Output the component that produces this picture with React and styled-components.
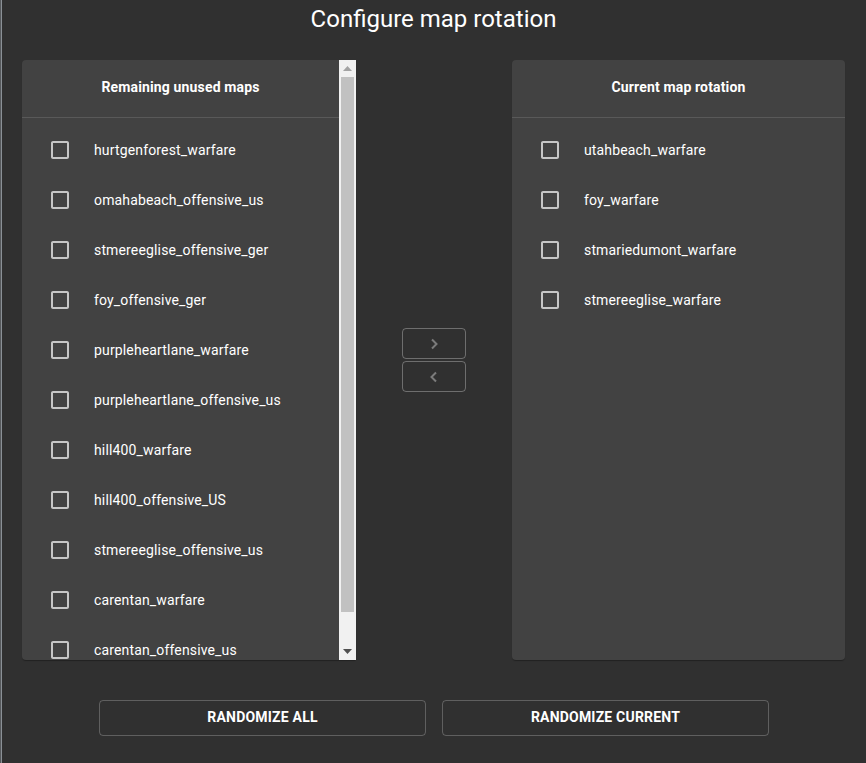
import styled, { createGlobalStyle } from 'styled-components';

const GlobalStyle = createGlobalStyle`
	html, body {
		margin: 0;
		padding: 0;
		background: #303030;
	}
	body {
		font-family: Roboto, 'Liberation Sans', Arial, sans-serif;
		color: #fff;
	}
`;

const Page = styled.div`
	box-sizing: border-box;
	min-height: 763px;
	width: 866px;
	border-left: 1px solid #55585b;
	box-shadow: inset 1px 0 0 #8a9096;
	padding-top: 3px;
`;
const Title = styled.h1`
	margin: 0;
	font-size: 24px;
	font-weight: 400;
	line-height: 32px;
	text-align: center;
	color: #fff;
`;
const Transfer = styled.div`
	display: grid;
	grid-template-columns: 334px 156px 333px;
	padding-left: 21px;
	margin-top: 25px;
`;
const Panel = styled.div`
	height: 600px;
	display: flex;
	background: #424242;
	border-radius: ${(props) => (props.scroll ? '4px 0 0 4px' : '4px')};
	overflow: hidden;
	box-shadow: 0 2px 1px -1px rgba(0, 0, 0, 0.2), 0 1px 1px 0 rgba(0, 0, 0, 0.14);
`;
const PanelBody = styled.div`
	flex: 1;
	min-width: 0;
	overflow: hidden;
`;
const ScrollBar = styled.div`
	width: 17px;
	flex: none;
	display: flex;
	flex-direction: column;
	background: #f1f1f1;
`;
const ScrollArrow = styled.div`
	height: 17px;
	display: flex;
	align-items: center;
	justify-content: center;
	svg {
		fill: ${(props) => (props.disabled ? '#a3a3a3' : '#505050')};
	}
`;
const ScrollTrack = styled.div`
	flex: 1;
	padding: 0 2px 31px;
	display: flex;
`;
const ScrollThumb = styled.div`
	flex: 1;
	background: #c1c1c1;
`;
const PanelHeader = styled.div`
	height: 58px;
	box-sizing: border-box;
	padding-bottom: 3px;
	display: flex;
	align-items: center;
	justify-content: center;
	font-size: 14px;
	font-weight: 700;
	letter-spacing: 0.15px;
	border-bottom: 1px solid rgba(255, 255, 255, 0.12);
`;
const List = styled.ul`
	list-style: none;
	margin: 0;
	padding: 7px 0 8px;
`;
const Item = styled.li`
	height: 50px;
	display: flex;
	align-items: center;
	padding-left: 26px;
	gap: 22px;
	font-size: 14px;
	letter-spacing: 0.15px;
	color: #fff;
`;
const Box = styled.svg`
	width: 24px;
	height: 24px;
	flex: none;
	fill: rgba(255, 255, 255, 0.7);
`;
const Middle = styled.div`
	display: flex;
	flex-direction: column;
	align-items: center;
	justify-content: center;
	gap: 2px;
`;
const MoveButton = styled.button`
	width: 64px;
	height: 31px;
	padding: 0;
	display: flex;
	align-items: center;
	justify-content: center;
	background: transparent;
	border: 1px solid rgba(255, 255, 255, 0.3);
	border-radius: 4px;
	svg {
		stroke: #7b7b7b;
	}
`;
const Actions = styled.div`
	display: flex;
	justify-content: center;
	gap: 16px;
	margin-top: 40px;
	padding-left: 1px;
`;
const ActionButton = styled.button`
	width: 327px;
	height: 36px;
	padding: 0 0 2px;
	background: transparent;
	border: 1px solid rgba(255, 255, 255, 0.23);
	border-radius: 4px;
	color: #fff;
	font-family: inherit;
	font-size: 14px;
	font-weight: 700;
	letter-spacing: 0.2px;
	text-transform: uppercase;
`;

const Checkbox = () => (
	<Box viewBox="0 0 24 24">
		<path d="M19 5v14H5V5h14m0-2H5c-1.1 0-2 .9-2 2v14c0 1.1.9 2 2 2h14c1.1 0 2-.9 2-2V5c0-1.1-.9-2-2-2z" />
	</Box>
);

const Chevron = ({ dir }) => (
	<svg width="12" height="12" viewBox="0 0 12 12" fill="none" strokeWidth="2">
		<polyline points={dir === 'right' ? '4,1.5 8.5,6 4,10.5' : '8,1.5 3.5,6 8,10.5'} />
	</svg>
);

const unused = [
	'hurtgenforest_warfare',
	'omahabeach_offensive_us',
	'stmereeglise_offensive_ger',
	'foy_offensive_ger',
	'purpleheartlane_warfare',
	'purpleheartlane_offensive_us',
	'hill400_warfare',
	'hill400_offensive_US',
	'stmereeglise_offensive_us',
	'carentan_warfare',
	'carentan_offensive_us',
];
const current = ['utahbeach_warfare', 'foy_warfare', 'stmariedumont_warfare', 'stmereeglise_warfare'];

const MapList = ({ title, maps, scroll }) => (
	<Panel scroll={scroll}>
		<PanelBody>
			<PanelHeader>{title}</PanelHeader>
			<List>
				{maps.map((m) => (
					<Item key={m}>
						<Checkbox />
						{m}
					</Item>
				))}
			</List>
		</PanelBody>
		{scroll && (
			<ScrollBar>
				<ScrollArrow disabled>
					<svg width="9" height="5" viewBox="0 0 9 5">
						<path d="M0 5h9L4.5 0z" />
					</svg>
				</ScrollArrow>
				<ScrollTrack>
					<ScrollThumb />
				</ScrollTrack>
				<ScrollArrow>
					<svg width="9" height="5" viewBox="0 0 9 5">
						<path d="M0 0h9L4.5 5z" />
					</svg>
				</ScrollArrow>
			</ScrollBar>
		)}
	</Panel>
);

const App = () => {
	return (
		<Page>
			<GlobalStyle />
			<Title>Configure map rotation</Title>
			<Transfer>
				<MapList title="Remaining unused maps" maps={unused} scroll />
				<Middle>
					<MoveButton>
						<Chevron dir="right" />
					</MoveButton>
					<MoveButton>
						<Chevron dir="left" />
					</MoveButton>
				</Middle>
				<MapList title="Current map rotation" maps={current} />
			</Transfer>
			<Actions>
				<ActionButton>Randomize all</ActionButton>
				<ActionButton>Randomize current</ActionButton>
			</Actions>
		</Page>
	);
};

export default App;
